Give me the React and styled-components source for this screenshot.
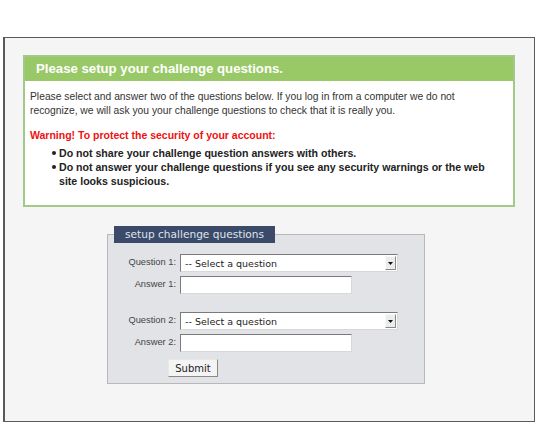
import React from "react";
import styled, { createGlobalStyle } from "styled-components";

const Global = createGlobalStyle`
  html, body { margin: 0; padding: 0; background: #ffffff; }
  body { width: 537px; height: 424px; overflow: hidden; }
`;

const Page = styled.div`
  padding: 37px 2px 3px 3px;
  box-sizing: border-box;
  width: 537px;
  height: 424px;
`;

const Frame = styled.div`
  box-sizing: border-box;
  height: 385px;
  border: 1px solid #5a5a5a;
  border-left-width: 2px;
  background: #f5f5f5;
  padding: 17px 19px 0 18px;
  display: flex;
  flex-direction: column;
`;

const NoticeBox = styled.section`
  border: 2px solid #a2c98a;
  background: #ffffff;
`;

const NoticeHeader = styled.h1`
  margin: 0;
  height: 24px;
  background: #98c966;
  color: #ffffff;
  font: bold 13.2px/24px "Liberation Sans", Arial, sans-serif;
  padding-left: 11px;
`;

const NoticeBody = styled.div`
  padding: 9px 5px 17px 5px;
  font-family: "Liberation Sans", Arial, sans-serif;
  font-size: 10.3px;
  line-height: 14px;
  color: #333;
`;

const Para = styled.p`
  margin: 0 0 10px;
  max-width: 440px;
`;

const Warning = styled.p`
  margin: 0 0 4px;
  color: #ee1111;
  font-weight: bold;
  font-size: 10.5px;
`;

const Bullets = styled.ul`
  margin: 0;
  padding: 0 20px 0 29px;
  font-weight: bold;
  font-size: 10.6px;
  color: #222;
  list-style: none;
`;

const Bullet = styled.li`
  position: relative;
  &::before {
    content: "";
    position: absolute;
    left: -7px;
    top: 5px;
    width: 4px;
    height: 4px;
    border-radius: 50%;
    background: #222;
  }
`;

const FormSet = styled.fieldset`
  margin: 19px 0 0 84px;
  width: 318px;
  box-sizing: border-box;
  border: 1px solid #b8b8b8;
  background: #e2e3e7;
  padding: 11px 0 6px 0;
  font-family: "DejaVu Sans", Verdana, sans-serif;
`;

const Legend = styled.legend`
  margin-left: 6px;
  background: #3a4a68;
  color: #dfe4ee;
  font-size: 10.6px;
  line-height: 17px;
  padding: 0 11px;
`;

const Grid = styled.div`
  display: grid;
  grid-template-columns: 68px auto;
  column-gap: 4px;
  row-gap: 4px;
  align-items: start;
`;

const Label = styled.label`
  text-align: right;
  font-family: "Liberation Sans", Arial, sans-serif;
  font-size: 9.3px;
  color: #444;
  padding-top: 3px;
`;

const SelectBox = styled.div`
  width: 218px;
  height: 18px;
  box-sizing: border-box;
  background: #fff;
  border: 1px solid;
  border-color: #7a7a7a #d8d8d8 #d8d8d8 #7a7a7a;
  display: flex;
  align-items: center;
  font-size: 9.5px;
  color: #222;
  padding-left: 4px;
`;

const SelectText = styled.span`
  flex: 1;
`;

const ArrowButton = styled.span`
  width: 11px;
  height: 14px;
  margin-right: 1px;
  box-sizing: border-box;
  background: #ececec;
  border: 1px solid;
  border-color: #f8f8f8 #8a8a8a #8a8a8a #f8f8f8;
  display: flex;
  align-items: center;
  justify-content: center;
`;

const TextInput = styled.input`
  width: 172px;
  height: 18px;
  box-sizing: border-box;
  border: 1px solid;
  border-color: #7a7a7a #d8d8d8 #d8d8d8 #7a7a7a;
  background: #fff;
  margin: 0;
  padding: 0;
`;

const Spacer = styled.div`
  grid-column: 1 / -1;
  height: 10px;
`;

const SubmitRow = styled.div`
  padding: 7px 0 0 60px;
  display: flex;
`;

const SubmitButton = styled.button`
  width: 50px;
  height: 18px;
  box-sizing: border-box;
  background: #f4f4f4;
  border: 1px solid;
  border-color: #e8e8e8 #888 #888 #e8e8e8;
  font-family: "DejaVu Sans", Verdana, sans-serif;
  font-size: 10px;
  color: #222;
  padding: 0;
`;

function QuestionSelect() {
  return (
    <SelectBox>
      <SelectText>-- Select a question</SelectText>
      <ArrowButton>
        <svg width="5" height="3" viewBox="0 0 5 3">
          <path d="M0 0h5L2.5 3z" fill="#111" />
        </svg>
      </ArrowButton>
    </SelectBox>
  );
}

export default function App() {
  return (
    <>
      <Global />
      <Page>
        <Frame>
          <NoticeBox>
            <NoticeHeader>Please setup your challenge questions.</NoticeHeader>
            <NoticeBody>
              <Para>
                Please select and answer two of the questions below. If you log in from a computer we do not
                recognize, we will ask you your challenge questions to check that it is really you.
              </Para>
              <Warning>Warning! To protect the security of your account:</Warning>
              <Bullets>
                <Bullet>Do not share your challenge question answers with others.</Bullet>
                <Bullet>
                  Do not answer your challenge questions if you see any security warnings or the web site looks
                  suspicious.
                </Bullet>
              </Bullets>
            </NoticeBody>
          </NoticeBox>
          <FormSet>
            <Legend>setup challenge questions</Legend>
            <Grid>
              <Label>Question 1:</Label>
              <QuestionSelect />
              <Label>Answer 1:</Label>
              <TextInput type="text" />
              <Spacer />
              <Label>Question 2:</Label>
              <QuestionSelect />
              <Label>Answer 2:</Label>
              <TextInput type="text" />
            </Grid>
            <SubmitRow>
              <SubmitButton>Submit</SubmitButton>
            </SubmitRow>
          </FormSet>
        </Frame>
      </Page>
    </>
  );
}
